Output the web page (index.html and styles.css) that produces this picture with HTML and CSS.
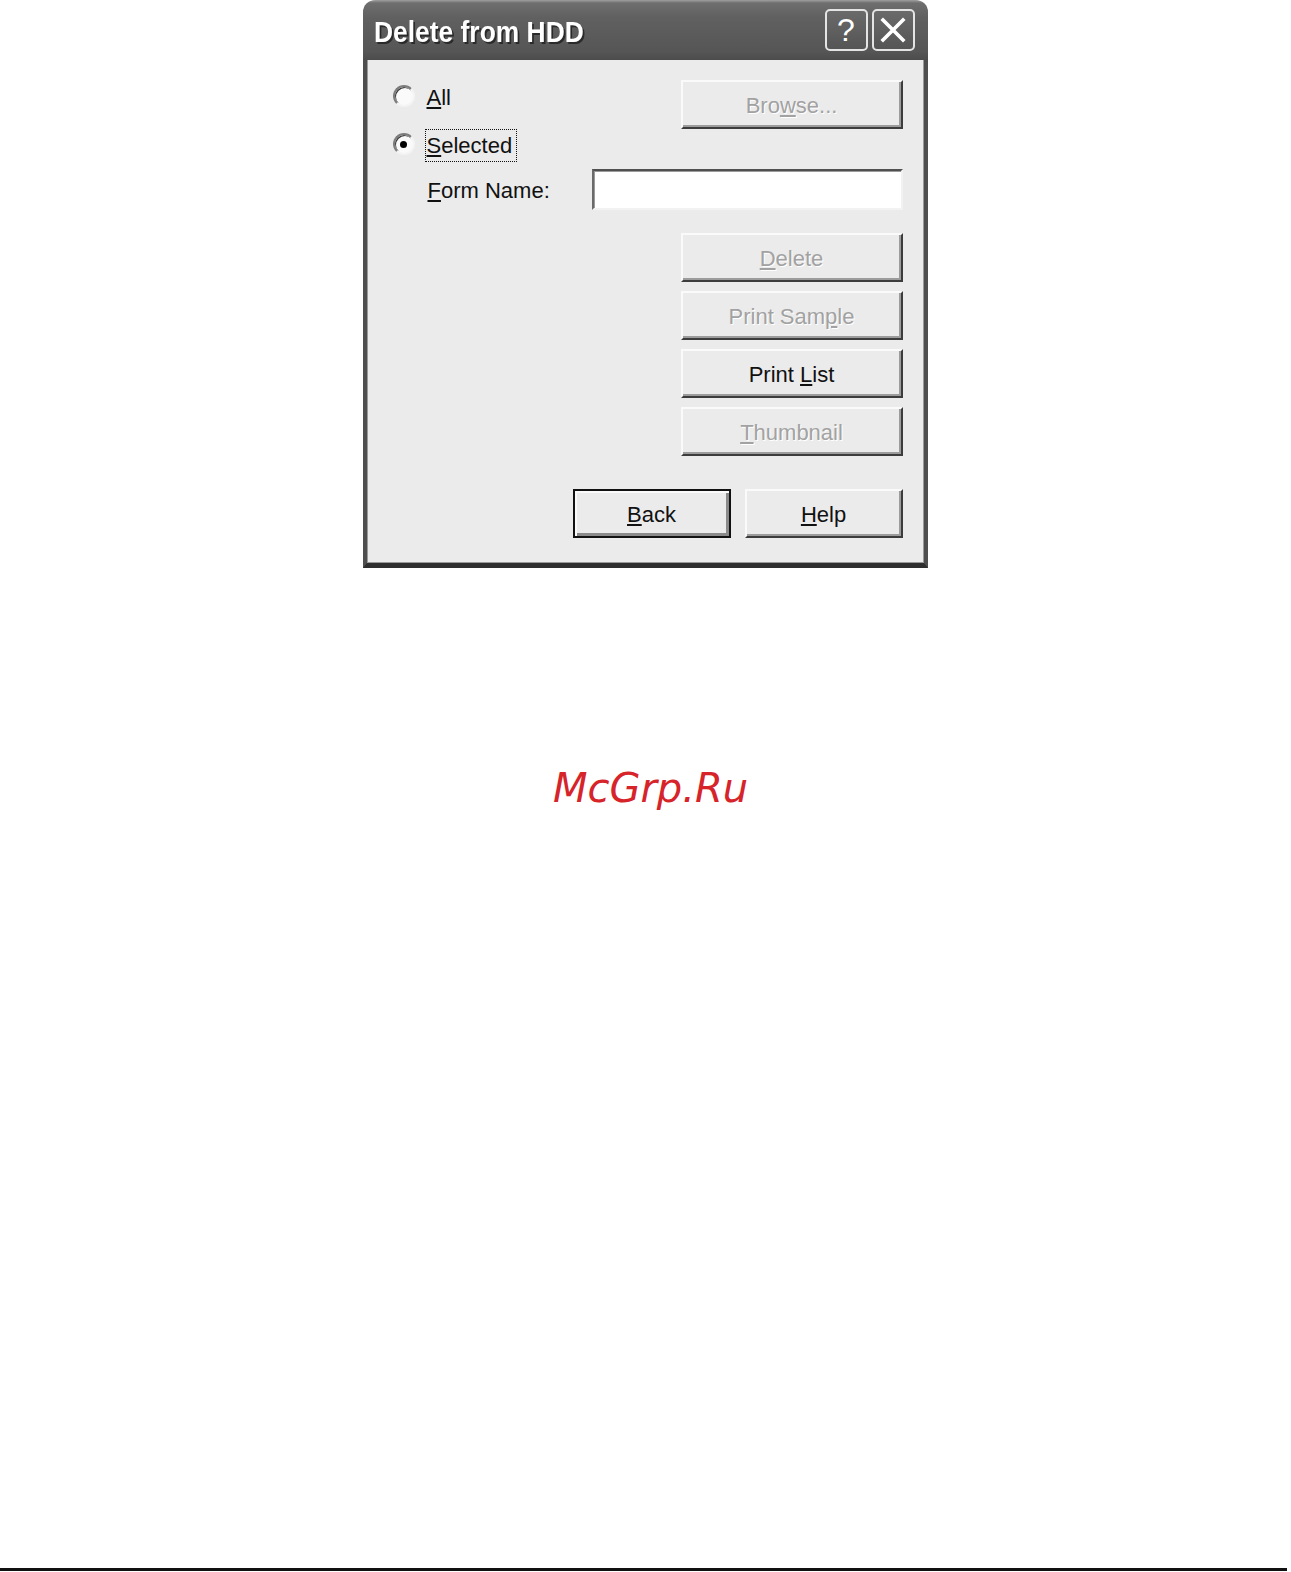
FILE: index.html
```html
<!DOCTYPE html>
<html lang="en">
<head>
  <meta charset="UTF-8">
  <meta name="viewport" content="width=device-width, initial-scale=1.0">
  <title>Delete from HDD</title>
  <link rel="stylesheet" href="styles.css">
</head>
<body>
  <div class="dialog">
    <div class="titlebar">
      <span class="title">Delete from HDD</span>
      <span class="caption-btn">?</span>
      <span class="caption-btn">
        <svg width="26" height="26" viewBox="0 0 26 26">
          <path d="M3 3 L23 23 M23 3 L3 23" stroke="#fff" stroke-width="3.6" stroke-linecap="square"/>
        </svg>
      </span>
    </div>

    <div class="dialog-body">
      <div class="top-row">
        <div class="radios">
          <div class="radio-row">
            <span class="radio"></span>
            <span class="radio-label"><u>A</u>ll</span>
          </div>
          <div class="radio-row">
            <span class="radio checked"></span>
            <span class="radio-label focused"><u>S</u>elected</span>
          </div>
        </div>
        <button class="btn disabled">Bro<u>w</u>se...</button>
      </div>

      <div class="form-row">
        <span class="field-label"><u>F</u>orm Name:</span>
        <span class="text-field"></span>
      </div>

      <div class="side-buttons">
        <button class="btn disabled"><u>D</u>elete</button>
        <button class="btn disabled">Print Sam<u>p</u>le</button>
        <button class="btn">Print <u>L</u>ist</button>
        <button class="btn disabled"><u>T</u>humbnail</button>
      </div>

      <div class="footer-buttons">
        <button class="btn small default"><u>B</u>ack</button>
        <button class="btn small"><u>H</u>elp</button>
      </div>
    </div>
  </div>

  <p class="watermark">McGrp.Ru</p>

  <div class="page-rule"></div>
</body>
</html>
```

FILE: styles.css
```css
* {
  margin: 0;
  padding: 0;
  box-sizing: border-box;
}

body {
  font-family: 'Liberation Sans', Arial, sans-serif;
  background-color: #fff;
  height: 1572px;
  display: flex;
  flex-direction: column;
  align-items: center;
  overflow: hidden;
}

/* window */

.dialog {
  width: 565px;
  margin-left: -1px;
}

.titlebar {
  height: 60px;
  display: flex;
  align-items: center;
  padding: 0 13px 0 11px;
  border-radius: 12px 12px 0 0;
  background: linear-gradient(#a0a0a0 0, #6e6e6e 3px, #606060 30%, #565656 85%, #4c4c4c);
}

.title {
  flex: 1;
  padding-top: 4px;
  color: #fff;
  font-size: 30px;
  font-weight: bold;
  white-space: nowrap;
  transform: scaleX(0.88);
  transform-origin: left center;
  text-shadow: 2px 2px 0 #2a2a2a;
}

.caption-btn {
  width: 43px;
  height: 42px;
  margin-left: 4px;
  display: flex;
  align-items: center;
  justify-content: center;
  border: 2px solid #e4e4e4;
  border-radius: 5px;
  background: linear-gradient(#6a6a6a, #555);
  color: #fff;
  font-size: 32px;
}

.dialog-body {
  height: 508px;
  padding: 20px 21px 25px 22px;
  background-color: #ebebeb;
  border: 4px solid #4e4e4e;
  border-top: none;
  border-bottom-width: 5px;
  border-bottom-color: #2e2e2e;
  box-shadow: inset 1px 0 #9a9a9a, inset -1px -1px #9a9a9a;
  font-size: 22px;
  color: #111;
}

/* radios and text field */

.top-row {
  display: flex;
  justify-content: space-between;
  padding-left: 4px;
}

.radios {
  display: flex;
  flex-direction: column;
  gap: 14px;
}

.radio-row {
  height: 34px;
  display: flex;
  align-items: center;
}

.radio {
  width: 22px;
  height: 22px;
  border-radius: 50%;
  background: #fafafa;
  border: 2px solid;
  border-color: #7c7c7c #f4f4f4 #f4f4f4 #7c7c7c;
  box-shadow: inset 1px 1px 0 #3a3a3a;
  display: flex;
  align-items: center;
  justify-content: center;
  margin-top: -2px;
}

.radio.checked::after {
  content: "";
  width: 7px;
  height: 7px;
  border-radius: 50%;
  background: #000;
}

.radio-label {
  margin-left: 10px;
  padding: 1px 1px 1px 1px;
  line-height: 29px;
  border: 1px solid transparent;
}

.radio-label.focused {
  border: 1px dotted #111;
  padding-right: 4px;
}

.form-row {
  display: flex;
  align-items: center;
  margin-top: 7px;
  padding-left: 39px;
}

.field-label {
  width: 164px;
  padding-top: 2px;
}

.text-field {
  width: 311px;
  height: 41px;
  background: #fff;
  border: 2px solid;
  border-color: #505050 #f2f2f2 #f2f2f2 #6a6a6a;
  box-shadow: inset 1px 1px 0 #9a9a9a;
}

/* push buttons */

.btn {
  width: 222px;
  height: 49px;
  padding-top: 2px;
  font-family: inherit;
  font-size: 22px;
  color: #111;
  background: #ebebeb;
  border: 2px solid;
  border-color: #fafafa #3c3c3c #3c3c3c #fafafa;
  box-shadow: inset -2px -2px 0 #9c9c9c;
}

.btn.disabled {
  color: #a2a2a2;
  text-shadow: 1px 1px 0 #fff;
}

.btn.small {
  width: 158px;
}

.btn.default {
  border: 2px solid #111;
  box-shadow: inset 2px 2px 0 #fafafa, inset -3px -3px 0 #8a8a8a;
}

.side-buttons {
  display: flex;
  flex-direction: column;
  align-items: flex-end;
  gap: 9px;
  margin-top: 23px;
}

.footer-buttons {
  display: flex;
  justify-content: flex-end;
  gap: 14px;
  margin-top: 33px;
}

/* page furniture */

.watermark {
  margin-top: 196px;
  font-family: 'DejaVu Sans', sans-serif;
  font-style: italic;
  font-size: 40px;
  line-height: 48px;
  color: #d6242a;
  padding-left: 10px;
}

.page-rule {
  margin-top: auto;
  margin-bottom: 1px;
  align-self: flex-start;
  width: 1287px;
  height: 3px;
  background: #111;
}
```
